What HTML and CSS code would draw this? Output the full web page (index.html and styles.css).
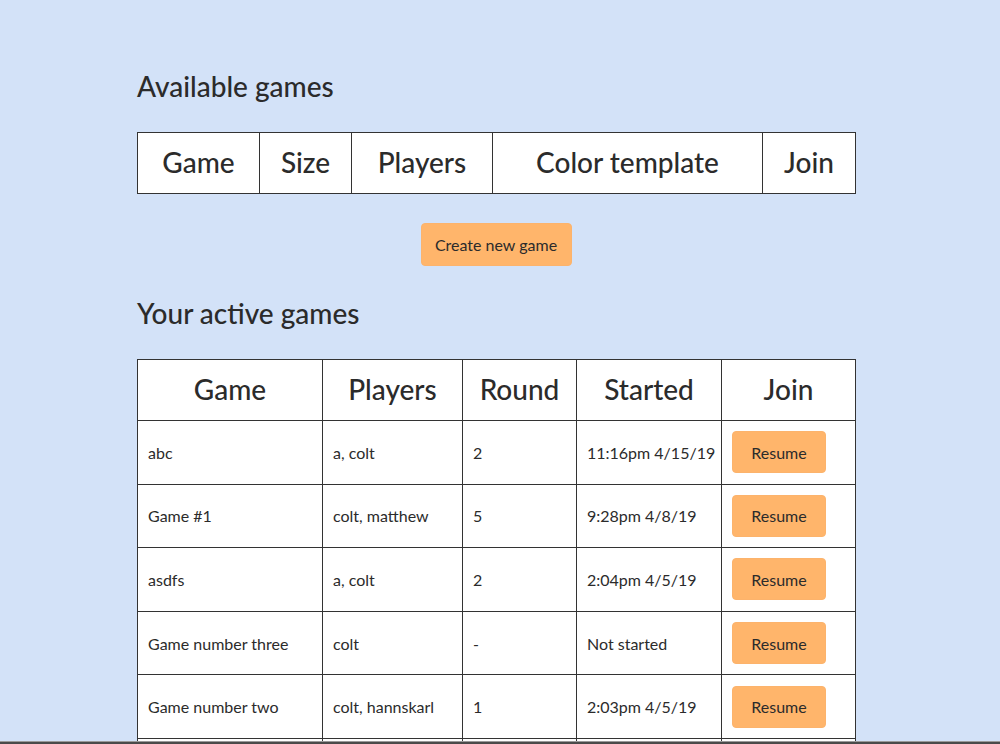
FILE: index.html
```html
<!DOCTYPE html>
<html>
<head>
<meta charset="utf-8">
<link rel="stylesheet" href="styles.css">
</head>
<body>
<main class="page">
  <h2 class="title">Available games</h2>
  <table class="grid grid-avail">
    <colgroup>
      <col class="c-a1"><col class="c-a2"><col class="c-a3"><col class="c-a4"><col class="c-a5">
    </colgroup>
    <thead>
      <tr>
        <th>Game</th>
        <th>Size</th>
        <th>Players</th>
        <th>Color template</th>
        <th>Join</th>
      </tr>
    </thead>
  </table>
  <div class="create-row">
    <button class="btn btn-create">Create new game</button>
  </div>
  <h2 class="title">Your active games</h2>
  <table class="grid grid-active">
    <colgroup>
      <col class="c-b1"><col class="c-b2"><col class="c-b3"><col class="c-b4"><col class="c-b5">
    </colgroup>
    <thead>
      <tr>
        <th>Game</th>
        <th>Players</th>
        <th>Round</th>
        <th>Started</th>
        <th>Join</th>
      </tr>
    </thead>
    <tbody>
      <tr><td>abc</td><td>a, colt</td><td>2</td><td>11:16pm 4/15/19</td><td><button class="btn btn-resume">Resume</button></td></tr>
      <tr><td>Game #1</td><td>colt, matthew</td><td>5</td><td>9:28pm 4/8/19</td><td><button class="btn btn-resume">Resume</button></td></tr>
      <tr><td>asdfs</td><td>a, colt</td><td>2</td><td>2:04pm 4/5/19</td><td><button class="btn btn-resume">Resume</button></td></tr>
      <tr><td>Game number three</td><td>colt</td><td>-</td><td>Not started</td><td><button class="btn btn-resume">Resume</button></td></tr>
      <tr><td>Game number two</td><td>colt, hannskarl</td><td>1</td><td>2:03pm 4/5/19</td><td><button class="btn btn-resume">Resume</button></td></tr>
      <tr><td>Game number one</td><td>colt</td><td>-</td><td>Not started</td><td><button class="btn btn-resume">Resume</button></td></tr>
    </tbody>
  </table>
</main>
<div class="frame-edge"></div>
</body>
</html>
```
FILE: styles.css
```css
html, body {
  margin: 0;
  padding: 0;
  background: #d3e2f8;
}
body {
  font-family: Lato, "Noto Sans", sans-serif;
  color: #2b2b2b;
}
.page {
  width: 718px;
  margin-left: 137px;
  padding-top: 67px;
}
.title {
  margin: 0;
  font-size: 28px;
  font-weight: 500;
  line-height: 38px;
  color: #2b2b2b;
}
.grid {
  border-collapse: collapse;
  background: #fff;
  width: 718px;
  table-layout: fixed;
}
.grid-avail {
  margin-top: 27px;
}
.grid th {
  border: 1px solid #333;
  font-size: 28px;
  font-weight: 500;
  height: 57px;
  padding: 0 0 3px 0;
  text-align: center;
  vertical-align: middle;
}
.grid td {
  border: 1px solid #333;
  font-size: 16px;
  padding: 10px;
  height: 42.6px;
  text-align: left;
  vertical-align: middle;
  white-space: nowrap;
}
.c-a1 { width: 122px; }
.c-a2 { width: 92px; }
.c-a3 { width: 141px; }
.c-a4 { width: 270px; }
.c-a5 { width: 93px; }
.c-b1 { width: 185px; }
.c-b2 { width: 140px; }
.c-b3 { width: 114px; }
.c-b4 { width: 145px; }
.c-b5 { width: 134px; }
.create-row {
  display: flex;
  justify-content: center;
  padding-top: 29px;
  padding-bottom: 28px;
}
.btn {
  background: #ffb56b;
  border: 1px solid #fcb36c;
  border-radius: 4px;
  font-family: inherit;
  font-size: 16px;
  color: #2b2b2b;
  cursor: pointer;
}
.btn-create {
  width: 151px;
  height: 43px;
  padding: 0;
}
.grid-active {
  margin-top: 27px;
}
.btn-resume {
  width: 94px;
  height: 42px;
  padding: 0;
}
.frame-edge {
  position: fixed;
  left: 0;
  right: 0;
  bottom: 0;
  height: 2px;
  background: #4a4a4a;
  border-top: 1px solid #9a9a9a;
}
```
